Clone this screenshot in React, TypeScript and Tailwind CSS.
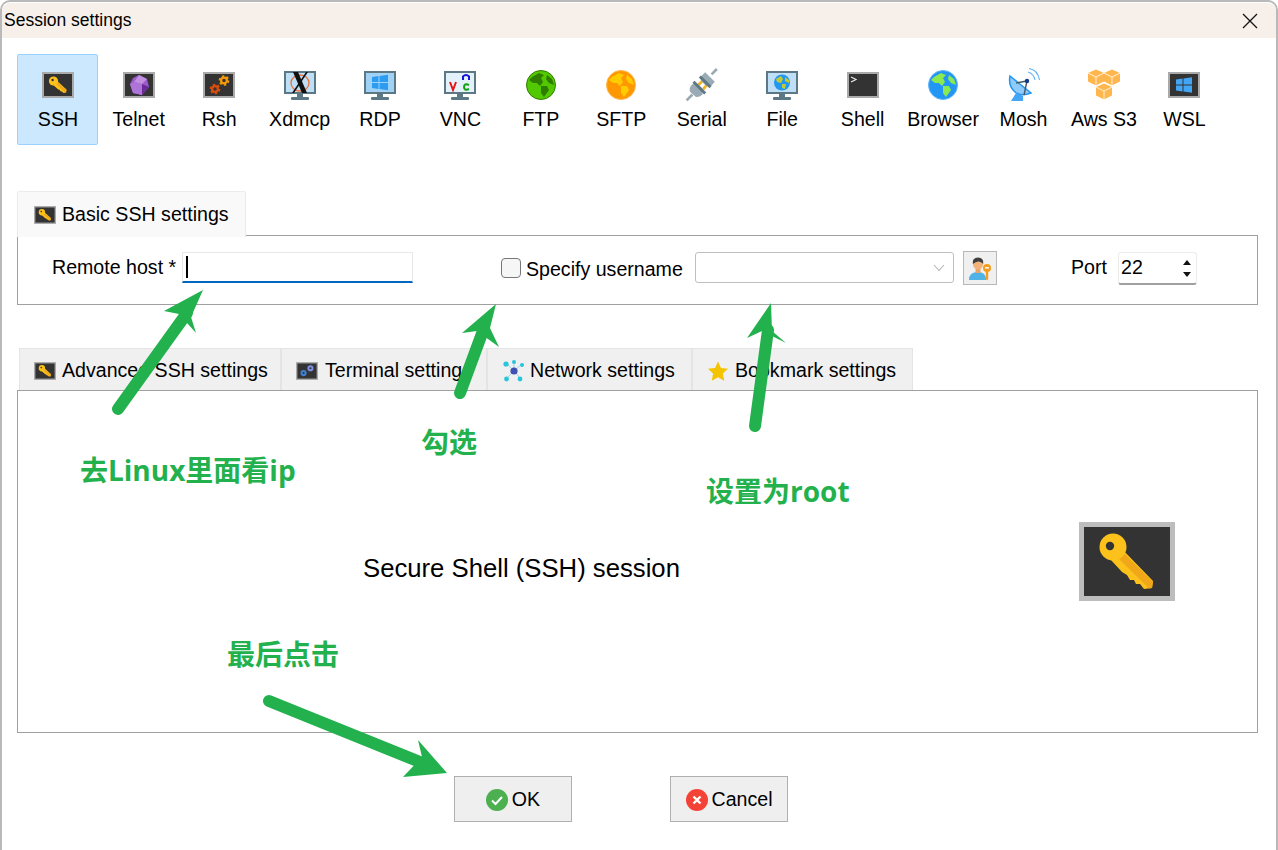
import React from "react";

const Tile = ({ children, size = 32 }: { children?: React.ReactNode; size?: number }) => (
  <svg width={size} height={size} viewBox="0 0 32 32">
    <rect x="1" y="4" width="30" height="24" fill="#333" stroke="#aaa" strokeWidth="2" />
    {children}
  </svg>
);

const KeyGlyph = () => (
  <g>
    <path d="M14 11 L24.5 20.5 L24 23.5 L21.5 24 L20 22.5 L18.8 22.5 L17.5 20.8 L16.3 20.6 L10 15 Z" fill="#fcc21b" />
    <path d="M14 12 L24.5 21 L24 23.5 L23 23.5 L13 14 Z" fill="#f0a818" />
    <circle cx="11.5" cy="12" r="4.6" fill="#fcc21b" />
    <circle cx="10.6" cy="11" r="1.2" fill="#333" />
  </g>
);

const KeyIcon = ({ size = 32 }: { size?: number }) => (
  <Tile size={size}>
    <KeyGlyph />
  </Tile>
);

const GemIcon = () => (
  <Tile>
    <path d="M16 6 L24 10 L26 18 L19 26 L10 24 L7 15 L10 9 Z" fill="#9b59c9" />
    <path d="M16 6 L24 10 L19 15 L11 13 Z" fill="#c38fe0" />
    <path d="M19 15 L26 18 L19 26 Z" fill="#6a2a9a" />
    <path d="M11 13 L19 15 L19 26 L10 24 L7 15 Z" fill="#ae74d8" />
  </Tile>
);

const Gear = ({ cx, cy, r, stroke }: { cx: number; cy: number; r: number; stroke: string }) => (
  <g>
    <circle cx={cx} cy={cy} r={r} fill="none" stroke={stroke} strokeWidth={r * 0.8} />
    <circle cx={cx} cy={cy} r={r * 1.55} fill="none" stroke={stroke} strokeWidth={r * 0.6} strokeDasharray={`${r * 0.8} ${r * 0.8}`} />
  </g>
);

const GearsIcon = () => (
  <Tile>
    <Gear cx={12} cy={20} r={2.9} stroke="#d84e0e" />
    <Gear cx={21} cy={11.5} r={2.9} stroke="#f59a0b" />
  </Tile>
);

const Monitor = ({ children }: { children?: React.ReactNode }) => (
  <svg width="32" height="32" viewBox="0 0 32 32">
    <rect x="1" y="3" width="30" height="21" fill="#bfdff6" stroke="#5d7885" strokeWidth="2" />
    <rect x="13" y="25" width="6" height="3" fill="#5d7885" />
    <rect x="7" y="28" width="18" height="3" rx="1" fill="#5d7885" />
    {children}
  </svg>
);

const XIcon = () => (
  <Monitor>
    <ellipse cx="16" cy="14" rx="9" ry="8" fill="none" stroke="#e8743b" strokeWidth="1.3" />
    <path d="M9 3 L14 3 L23 24 L18 24 Z" fill="#111" />
    <path d="M22 3 L24 3 L10 24 L8 24 Z" fill="#111" />
  </Monitor>
);

const WinGlyph = ({ x, y, c }: { x: number; y: number; c: string }) => (
  <g fill={c}>
    <path d={`M${x} ${y + 1.5} L${x + 6.5} ${y + 0.6} V${y + 6.5} H${x} Z`} />
    <path d={`M${x + 7.5} ${y + 0.4} L${x + 16} ${y - 0.8} V${y + 6.5} H${x + 7.5} Z`} />
    <path d={`M${x} ${y + 7.5} H${x + 6.5} V${y + 13.4} L${x} ${y + 12.5} Z`} />
    <path d={`M${x + 7.5} ${y + 7.5} H${x + 16} V${y + 14.8} L${x + 7.5} ${y + 13.6} Z`} />
  </g>
);

const RdpIcon = () => (
  <Monitor>
    <rect x="2" y="4" width="28" height="19" fill="#9fd2f5" />
    <WinGlyph x={8} y={6.5} c="#2c9cf2" />
  </Monitor>
);

const VncIcon = () => (
  <Monitor>
    <rect x="2" y="4" width="28" height="19" fill="#e3f1fb" />
    <path d="M6 13 L9 21 L12 13" fill="none" stroke="#e81313" strokeWidth="2" />
    <path d="M19 11 V7.5 Q22 4.5 25 7.5 V11" fill="none" stroke="#1414e0" strokeWidth="2" />
    <path d="M25 16 Q20 14 20 18 Q20 22 25 20" fill="none" stroke="#0fa30f" strokeWidth="2" />
  </Monitor>
);

const Land = ({ c }: { c: string }) => (
  <g fill={c}>
    <path d="M7 8 L14 4 L19 6 L16 9 L18 13 L15 17 L12 14 L8 14 L4 11 Z" />
    <path d="M16 17 L22 17 L24 21 L19 28 L16 24 Z" />
    <path d="M22 6 L27 10 L29 16 L24 14 L21 10 Z" />
  </g>
);

const Globe = ({ sea, land, ring }: { sea: string; land: string; ring?: string }) => (
  <svg width="32" height="32" viewBox="0 0 32 32">
    <circle cx="16" cy="16" r="14.5" fill={sea} stroke={ring ?? sea} strokeWidth="1" />
    <Land c={land} />
  </svg>
);

const SerialIcon = () => (
  <svg width="34" height="34" viewBox="0 0 32 32">
    <path d="M12.5 16 L17 11.5 M17 20 L21 15.5" stroke="#f5b21c" strokeWidth="2.5" />
    <path d="M19 4 L28 13 L25 16.5 Q22 18 19 16 L15.5 12.5 Q14 10 15.5 7.5 Z" fill="#9aabb5" />
    <path d="M25 6 L30 1" stroke="#9aabb5" strokeWidth="2.5" />
    <path d="M14 8 L24 18" stroke="#5d7885" strokeWidth="2.8" />
    <path d="M13 16 L16.5 19.5 L16.5 25 Q13.5 28 10 27 L4.5 22 Q3.5 19 6 16 L9 14 Z" fill="#9aabb5" />
    <path d="M7 25 L1.5 30.5" stroke="#9aabb5" strokeWidth="2.5" />
    <path d="M8 13 L19 24" stroke="#5d7885" strokeWidth="2.8" />
  </svg>
);

const FileIcon = () => (
  <Monitor>
    <circle cx="16" cy="13.5" r="8" fill="#2196f3" />
    <path d="M10 10 L15 7 L17 10 L15 14 L11 13 Z M16 15 L20 15 L19 20 L16 19 Z M19 8 L23 11 L23 14 L19 12 Z" fill="#c0ca33" />
  </Monitor>
);

const ShellIcon = () => (
  <Tile>
    <path d="M4 8 L9 10.5 L4 13" fill="none" stroke="#e8e8e8" strokeWidth="1.2" />
  </Tile>
);

const MoshIcon = () => (
  <svg width="34" height="34" viewBox="0 0 34 34">
    <path d="M3 8 Q1 18 8 24 Q14 29 24 25 Z" fill="#90caf9" stroke="#2196f3" strokeWidth="1.5" />
    <path d="M4 33 L9 25 L16 28 L16 33 Z" fill="#42a5f5" />
    <path d="M9 15 L20 13 L17 27" fill="none" stroke="#455a64" strokeWidth="1.4" />
    <circle cx="20" cy="13" r="2.2" fill="#0d3c8c" />
    <path d="M21 4 Q27 6 28 12" fill="none" stroke="#64b5f6" strokeWidth="1.2" />
    <path d="M22 0.5 Q31 2 32.5 12" fill="none" stroke="#64b5f6" strokeWidth="1.2" />
  </svg>
);

const Cube = ({ x, y }: { x: number; y: number }) => (
  <g transform={`translate(${x} ${y})`}>
    <path d="M8 0 L16 3.5 V12 L8 16 L0 12 V3.5 Z" fill="#ffb74d" />
    <path d="M0 3.5 L8 7.5 L16 3.5 M8 7.5 V16" fill="none" stroke="#fff" strokeWidth="0.8" />
  </g>
);

const S3Icon = () => (
  <svg width="32" height="32" viewBox="0 0 32 32">
    <Cube x={0} y={0.5} />
    <Cube x={16} y={0.5} />
    <Cube x={8} y={14.5} />
  </svg>
);

const WslIcon = () => (
  <Tile>
    <WinGlyph x={8} y={9} c="#42a5f5" />
  </Tile>
);

const TermTab = () => (
  <svg width="22" height="22" viewBox="0 0 32 32">
    <rect x="1" y="4" width="30" height="24" fill="#333" stroke="#aaa" strokeWidth="2" />
    <circle cx="11" cy="19" r="3" fill="none" stroke="#3f7fd6" strokeWidth="3" />
    <circle cx="21" cy="12" r="3" fill="none" stroke="#7d8fe0" strokeWidth="3" />
  </svg>
);

const NetTab = () => (
  <svg width="24" height="24" viewBox="0 0 24 24">
    <path d="M12 12 L4 4 M12 12 L12 2 M12 12 L20 5 M12 12 L4 20 M12 12 L19 20" stroke="#9ad5e8" strokeWidth="1" />
    <circle cx="4" cy="5" r="2.6" fill="#26c6da" />
    <circle cx="12" cy="3" r="2" fill="#26c6da" />
    <circle cx="20" cy="6" r="2" fill="#26c6da" />
    <circle cx="4.5" cy="20" r="2.4" fill="#26c6da" />
    <circle cx="18" cy="20" r="2.4" fill="#26c6da" />
    <circle cx="12" cy="12" r="3.6" fill="#3f51b5" />
  </svg>
);

const StarTab = () => (
  <svg width="22" height="22" viewBox="0 0 24 24">
    <path d="M12 1.5 L15.3 8.6 L23 9.5 L17.3 14.8 L18.8 22.5 L12 18.7 L5.2 22.5 L6.7 14.8 L1 9.5 L8.7 8.6 Z" fill="#f5c400" />
  </svg>
);

const UserKey = () => (
  <svg width="26" height="26" viewBox="0 0 26 26">
    <path d="M2 25 Q2 17 11 17 Q19 17 19 25 Z" fill="#4fb3e8" />
    <rect x="8.5" y="13" width="5" height="5" fill="#e9a66a" />
    <circle cx="11" cy="9.5" r="5" fill="#f2b27a" />
    <path d="M5.8 9 Q5 2.5 11 2.5 Q17 2.5 16.2 9 Q14 6 11 6.5 Q8 7 5.8 9 Z" fill="#3e3e3e" />
    <circle cx="20" cy="13" r="4" fill="#f59c1a" />
    <rect x="18" y="12" width="4" height="1.5" fill="#fff" />
    <path d="M18.8 16 H21.2 V24 L20 25.5 L18.8 24 Z" fill="#f59c1a" />
  </svg>
);

const sessions: [string, React.ReactNode][] = [
  ["SSH", <KeyIcon />],
  ["Telnet", <GemIcon />],
  ["Rsh", <GearsIcon />],
  ["Xdmcp", <XIcon />],
  ["RDP", <RdpIcon />],
  ["VNC", <VncIcon />],
  ["FTP", <Globe sea="#52c800" land="#2f7d00" ring="#2f7d00" />],
  ["SFTP", <Globe sea="#ff9800" land="#ffcc00" ring="#ffb74d" />],
  ["Serial", <SerialIcon />],
  ["File", <FileIcon />],
  ["Shell", <ShellIcon />],
  ["Browser", <Globe sea="#2196f3" land="#8bea4f" ring="#64b5f6" />],
  ["Mosh", <MoshIcon />],
  ["Aws S3", <S3Icon />],
  ["WSL", <WslIcon />],
];

const tabs: [string, React.ReactNode, string][] = [
  ["Advanced SSH settings", <KeyIcon size={22} />, "w-[262px] gap-[6px]"],
  ["Terminal settings", <TermTab />, "w-[206px] gap-[7px]"],
  ["Network settings", <NetTab />, "w-[205px] gap-[4px]"],
  ["Bookmark settings", <StarTab />, "w-[221px] gap-[6px]"],
];

const Arrow = ({ x1, y1, x2, y2, w, head }: { x1: number; y1: number; x2: number; y2: number; w: number; head: string }) => (
  <g>
    <line x1={x1} y1={y1} x2={x2} y2={y2} stroke="#23b14d" strokeWidth={w} strokeLinecap="round" />
    <polygon points={head} fill="#23b14d" />
  </g>
);

const Note = ({ className, children }: { className: string; children: React.ReactNode }) => (
  <div className={`absolute whitespace-nowrap text-[28px] leading-[36px] font-bold text-[#23b14d] [font-family:'Open_Sans','Noto_Sans_CJK_SC',sans-serif] ${className}`}>{children}</div>
);

export default function App() {
  return (
    <div className="relative h-[850px] w-[1278px] overflow-hidden bg-white text-[19.6px] text-black [font-family:'Liberation_Sans','Noto_Sans_CJK_SC',sans-serif]">
      <div className="h-[850px] rounded-t-[10px] border-x-2 border-t-2 border-[#b9b9b9] pt-px">
        <div className="flex h-[35px] items-center justify-between rounded-t-[8px] bg-[#f7f0ea] pl-[2px] pr-[18px] text-[17.5px]">
          <span>Session settings</span>
          <svg width="16" height="16" viewBox="0 0 16 16">
            <path d="M1 1 L15 15 M15 1 L1 15" stroke="#111" strokeWidth="1.3" />
          </svg>
        </div>

        <div className="mt-4 ml-[15px] flex h-[91px]">
          {sessions.map(([label, icon], i) => (
            <div
              key={label}
              className={`flex flex-col items-center rounded-[2px] border pt-[14px] pl-px ${
                i === 0 ? "w-[81px] border-[#99d1ff] bg-[#cce8ff]" : "w-[80.45px] border-transparent"
              }`}
            >
              <div className="flex h-[32px] items-center justify-center">{icon}</div>
              <div className="mt-[6px] h-[24px] leading-[24px]">{label}</div>
            </div>
          ))}
        </div>

        <div className="relative mt-[46px] ml-[15px] w-[1241px]">
          <div className="relative z-10 flex h-[46px] w-[229px] items-center gap-[6px] rounded-t-[2px] border-x border-t border-[#ececec] bg-[#f9f9f9] pl-[16px]">
            <KeyIcon size={22} />
            <span>Basic SSH settings</span>
          </div>
          <div className="-mt-[2px] flex h-[70px] items-start border border-[#a0a0a0] bg-white pt-[15px] pl-[34px]">
            <span className="mt-[3px] w-[130px] leading-[26px]">Remote host *</span>
            <div className="mt-px flex h-[31px] w-[231px] items-center border border-b-2 border-[#e8e8e8] border-b-[#0067c0] pl-[3px]">
              <div className="h-[22px] w-[1.5px] bg-black" />
            </div>
            <div className="mt-[7px] ml-[88px] h-[20px] w-[20px] rounded-[4px] border border-[#777] bg-[#f6f6f6]" />
            <span className="mt-[5px] ml-[5px] w-[169px] leading-[26px]">Specify username</span>
            <div className="mt-px flex h-[31px] w-[259px] items-center justify-end rounded-[3px] border border-[#bfbfbf] pr-2">
              <svg width="12" height="8" viewBox="0 0 12 8">
                <path d="M1 1 L6 6.5 L11 1" fill="none" stroke="#b5b5b5" strokeWidth="1.1" />
              </svg>
            </div>
            <div className="ml-[9px] flex h-[34px] w-[34px] items-center justify-center border border-[#b8b8b8] bg-[#f0f0f0]">
              <UserKey />
            </div>
            <span className="mt-px ml-[74px] w-[47px] leading-[31px]">Port</span>
            <div className="mt-px flex h-[33px] w-[79px] items-center justify-between rounded-[3px] border border-b-2 border-[#ececec] border-b-[#a0a0a0] pl-[2px] pr-[5px]">
              <span>22</span>
              <div className="flex flex-col gap-[7px]">
                <svg width="8" height="5" viewBox="0 0 8 5"><path d="M4 0 L8 5 H0 Z" fill="#111" /></svg>
                <svg width="8" height="5" viewBox="0 0 8 5"><path d="M0 0 H8 L4 5 Z" fill="#111" /></svg>
              </div>
            </div>
          </div>
        </div>

        <div className="mt-[43px] ml-[15px] w-[1241px]">
          <div className="ml-[2px] flex h-[42px]">
            {tabs.map(([label, icon, w]) => (
              <div key={label} className={`flex items-center border border-b-0 border-[#e4e4e4] bg-[#f0f0f0] pt-[2px] pl-[14px] ${w}`}>
                {icon}
                <span>{label}</span>
              </div>
            ))}
          </div>
          <div className="flex h-[343px] items-center justify-between border border-[#a0a0a0] bg-white pl-[345px] pr-[82px]">
            <span className="mt-[14px] text-[25.7px]">Secure Shell (SSH) session</span>
            <svg width="96" height="79" viewBox="0 0 96 79">
              <rect x="2.5" y="2.5" width="91" height="74" fill="#333" stroke="#bdbdbd" strokeWidth="5" />
              <path d="M42 26 L74 59 L73 66 L65 67 L61 62 L57 62 L55 58 L51 58 L48 53 L43 50 L32 38 Z" fill="#fcc21b" />
              <path d="M44 30 L74 60 L73 66 L70 66.5 L40 37 Z" fill="#f0a818" />
              <circle cx="34" cy="25" r="13.5" fill="#fcc21b" />
              <circle cx="31" cy="24" r="4.2" fill="#333" />
            </svg>
          </div>
        </div>

        <div className="mt-[43px] ml-[452px] flex gap-[98px]">
          <div className="flex h-[46px] w-[118px] items-center justify-center gap-[4px] border border-[#b0b0b0] bg-[#efefef] pt-[2px]">
            <svg width="22" height="22" viewBox="0 0 22 22">
              <circle cx="11" cy="11" r="11" fill="#4caf50" />
              <path d="M6 11.5 L9.5 15 L16 8" fill="none" stroke="#fff" strokeWidth="2" />
            </svg>
            <span>OK</span>
          </div>
          <div className="flex h-[46px] w-[118px] items-center justify-center gap-[4px] border border-[#b0b0b0] bg-[#efefef] pt-[2px]">
            <svg width="22" height="22" viewBox="0 0 22 22">
              <circle cx="11" cy="11" r="11" fill="#f44336" />
              <path d="M7.5 7.5 L14.5 14.5 M14.5 7.5 L7.5 14.5" fill="none" stroke="#fff" strokeWidth="2.4" />
            </svg>
            <span>Cancel</span>
          </div>
        </div>
      </div>

      <svg className="pointer-events-none absolute inset-0" width="1278" height="850" viewBox="0 0 1278 850">
        <Arrow x1={118} y1={409} x2={187} y2={313} w={12} head="203,290 164,311 179,314 196,333 191,317" />
        <Arrow x1={460} y1={393} x2={484} y2={328} w={12} head="496,304 462,333 477,331 499,347 490,328" />
        <Arrow x1={755} y1={426} x2={768} y2={330} w={12} head="771,303 747,338 762,331 786,343 772,331" />
        <Arrow x1={269} y1={701} x2={425} y2={764} w={12} head="447,773 418,740 422,757 403,777" />
      </svg>

      <Note className="left-[80px] top-[452px]">去Linux里面看ip</Note>
      <Note className="left-[421px] top-[424px]">勾选</Note>
      <Note className="left-[706px] top-[473px]">设置为root</Note>
      <Note className="left-[227px] top-[636px]">最后点击</Note>
    </div>
  );
}
